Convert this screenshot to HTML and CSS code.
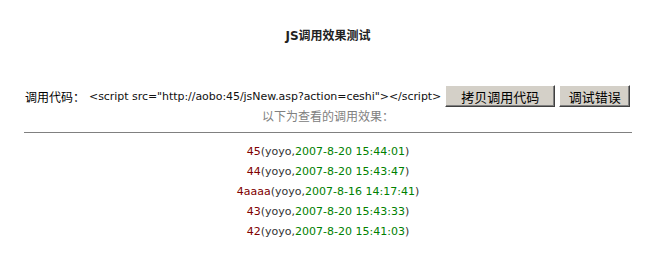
FILE: index.html
```html
<!DOCTYPE html>
<html>
<head>
    <title>JS调用效果测试</title>
    <link rel="stylesheet" href="styles.css">
</head>
<body>
    <div class="page">
        <h1 class="title">JS调用效果测试</h1>

        <div class="code-row">
            <span class="label">调用代码：</span>
            <span class="code">&lt;script src="http://aobo:45/jsNew.asp?action=ceshi"&gt;&lt;/script&gt;</span>
            <button class="btn btn-copy">拷贝调用代码</button>
            <button class="btn btn-debug">调试错误</button>
        </div>
        <div class="hint">以下为查看的调用效果：</div>

        <div class="results">
            <div class="item"><span class="num">45</span>(yoyo,<span class="date">2007-8-20 15:44:01</span>)</div>
            <div class="item"><span class="num">44</span>(yoyo,<span class="date">2007-8-20 15:43:47</span>)</div>
            <div class="item"><span class="num">4aaaa</span>(yoyo,<span class="date">2007-8-16 14:17:41</span>)</div>
            <div class="item"><span class="num">43</span>(yoyo,<span class="date">2007-8-20 15:43:33</span>)</div>
            <div class="item"><span class="num">42</span>(yoyo,<span class="date">2007-8-20 15:41:03</span>)</div>
        </div>
    </div>
</body>
</html>
```

FILE: styles.css
```css
body {
    margin: 0;
    padding: 0;
    background-color: #fff;
    font-family: "DejaVu Sans", Tahoma, "Noto Sans CJK SC", sans-serif;
    font-size: 11px;
    color: #000;
}

.page {
    width: 608px;
    margin-left: 24px;
    padding-top: 28px;
}

.title {
    margin: 0;
    font-size: 12px;
    line-height: 16px;
    font-weight: bold;
    text-align: center;
    color: #222;
}

.code-row {
    display: flex;
    align-items: center;
    margin-top: 41px;
    padding-left: 1px;
    white-space: nowrap;
}

.label {
    flex-shrink: 0;
    margin-right: 4px;
    font-family: "Noto Sans CJK SC", sans-serif;
    font-size: 12px;
}

.code {
    flex-shrink: 0;
    color: #111;
    letter-spacing: -0.05px;
}

.btn {
    flex-shrink: 0;
    height: 22px;
    padding: 0;
    margin: 0;
    background-color: #d4d0c8;
    border: 1px solid;
    border-color: #fff #404040 #404040 #fff;
    box-shadow: inset -1px -1px 0 #808080;
    font-family: "Noto Sans CJK SC", sans-serif;
    font-size: 13px;
    color: #000;
}

.btn-copy {
    width: 110px;
    margin-left: 4px;
}

.btn-debug {
    width: 71px;
    margin-left: 4px;
}

.hint {
    text-align: center;
    color: #808080;
    line-height: 16px;
    margin-top: 1px;
    font-family: "Noto Sans CJK SC", sans-serif;
    font-size: 12px;
}

.results {
    border-top: 1px solid #808080;
    margin-top: 8px;
    padding-top: 9px;
    text-align: center;
}

.item {
    line-height: 20px;
    color: #333;
}

.num {
    color: #800000;
}

.date {
    color: #008000;
}
```
